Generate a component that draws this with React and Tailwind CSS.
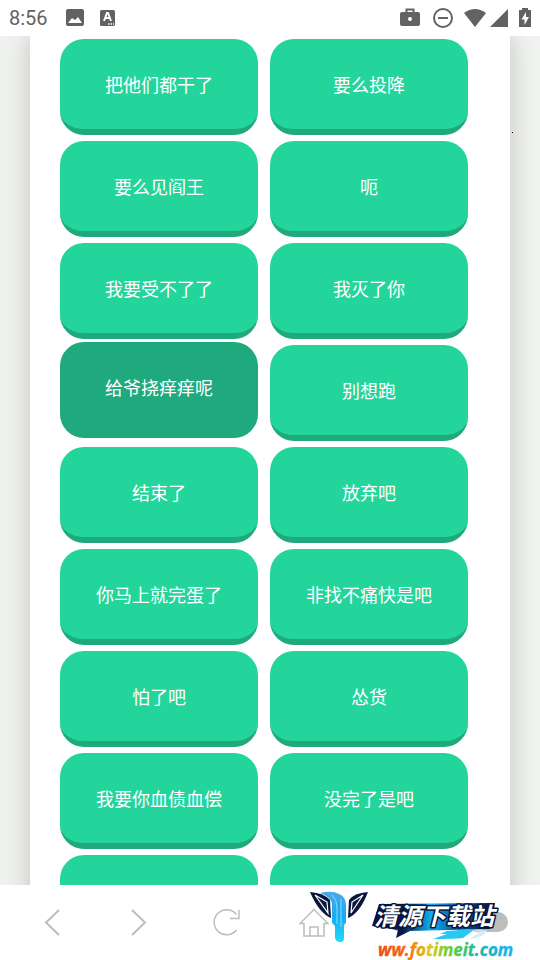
import React from "react";

const phrases = [
  "把他们都干了", "要么投降", "要么见阎王", "呃", "我要受不了了", "我灭了你",
  "给爷挠痒痒呢", "别想跑", "结束了", "放弃吧", "你马上就完蛋了", "非找不痛快是吧",
  "怕了吧", "怂货", "我要你血债血偿", "没完了是吧", "", "",
];

function PhraseButton({ label, pressed }) {
  return (
    <button
      type="button"
      aria-pressed={pressed}
      className={
        "h-24 rounded-3xl border-b-[6px] border-[#1fa97d] text-lg text-white " +
        (pressed ? "-translate-y-[3px] bg-[#1fa97d]" : "bg-[#24d59b]")
      }
    >
      {label}
    </button>
  );
}

function StatusBar() {
  return (
    <header className="flex h-9 shrink-0 items-center justify-between bg-white pr-[9px] pl-[9px] text-[#626262]">
      <div className="flex items-center">
        <span className="w-14 font-[Roboto,sans-serif] text-xl">8:56</span>
        <svg className="size-5" viewBox="0 0 20 20" fill="currentColor" aria-hidden="true">
          <path fillRule="evenodd" d="M3 1h14a2 2 0 0 1 2 2v13a2 2 0 0 1-2 2H3a2 2 0 0 1-2-2V3a2 2 0 0 1 2-2Zm0 14h14l-4-6-3 3-3-2Z" />
        </svg>
        <svg className="ml-3 size-5" viewBox="0 0 20 20" aria-hidden="true">
          <rect x="3" y="2" width="15" height="16" rx="1.5" fill="currentColor" />
          <path d="m7 13 3-8h1l3 8m-6-3h5" fill="none" stroke="#fff" strokeWidth="2" />
          <path d="M11 16h1.500m1 0h1.500m1 0h1" stroke="#fff" strokeWidth="1.500" />
        </svg>
      </div>
      <div className="flex items-center">
        <svg className="h-5 w-[22px]" viewBox="0 0 22 20" aria-hidden="true">
          <rect x="1" y="4" width="20" height="14" rx="2" fill="currentColor" />
          <path d="M7.500 5V1.500h7V5" fill="none" stroke="currentColor" strokeWidth="2" />
          <circle cx="11" cy="11" r="2" fill="#fff" />
        </svg>
        <svg className="ml-3 size-5" viewBox="0 0 20 20" fill="none" stroke="currentColor" strokeWidth="2" aria-hidden="true">
          <circle cx="10" cy="10" r="9" />
          <path d="M5 10h10" />
        </svg>
        <svg className="ml-[10px] h-5 w-6" viewBox="0 0 24 20" fill="currentColor" aria-hidden="true">
          <path d="M1 5Q12-3 23 5L12 19Z" />
        </svg>
        <svg className="ml-[2px] size-5" viewBox="0 0 20 20" fill="currentColor" aria-hidden="true">
          <path d="M19 1v18H1Z" />
        </svg>
        <svg className="ml-[10px] h-5 w-3" viewBox="0 0 12 20" aria-hidden="true">
          <path d="M3 0h6v2h3v17H0V2h3Z" fill="currentColor" />
          <path d="M7 4 2.500 11.500H5.500V17L10 9H7Z" fill="#fff" />
        </svg>
      </div>
    </header>
  );
}

const navIcons = [
  { name: "后退", path: "M22 3 9 15.500l13 12.500", stroke: 2 },
  { name: "前进", path: "m8 3 13 12.500L8 28", stroke: 2 },
  { name: "刷新", path: "M25.500 23a12.500 12.500 0 1 1 0-15.500M28 3v8.500h-9", stroke: 1.5 },
  { name: "主页", path: "M1 16.500 15 2.500l14 14H25V29H5V16.500ZM11 29v-9h8v9", stroke: 1.5 },
  { name: "更多", path: "M15 6.500a9 9 0 1 0 0 18 9 9 0 0 0 0-18", stroke: 1.5 },
];

function Watermark() {
  return (
    <div className="pointer-events-none absolute top-0 right-0">
      <svg className="h-[75px] w-[236px]" viewBox="304 885 236 75" role="img" aria-label="清源下载站">
        <defs>
          <linearGradient id="beam" x1="0" y1="0" x2="0" y2="1">
            <stop offset="0" stopColor="#4aa8ea" />
            <stop offset=".5" stopColor="#18aaf2" />
            <stop offset="1" stopColor="#20dcfa" />
          </linearGradient>
          <linearGradient id="panel">
            <stop offset="0" stopColor="#07103a" />
            <stop offset=".25" stopColor="#07194a" />
            <stop offset=".48" stopColor="#10b0f0" />
            <stop offset=".7" stopColor="#0a4f9a" />
            <stop offset="1" stopColor="#071033" />
          </linearGradient>
          <linearGradient id="address" gradientUnits="userSpaceOnUse" x1="378" y1="0" x2="511" y2="0">
            <stop offset="0" stopColor="#ee4a16" />
            <stop offset=".22" stopColor="#f56b10" />
            <stop offset=".38" stopColor="#e3c51a" />
            <stop offset=".55" stopColor="#62cf34" />
            <stop offset=".75" stopColor="#16b8a8" />
            <stop offset="1" stopColor="#20aef5" />
          </linearGradient>
        </defs>
        <path d="M310 892q14 1 20 8l1 18q-12-5-21-26Z" fill="#08163d" />
        <path d="m315 895 12 7 1 11Zm0 0 13 18" fill="none" stroke="#fff" strokeWidth="1.2" />
        <path d="M368 892q-14 1-19 8l-1 18q12-5 20-26Z" fill="#08163d" />
        <path d="m363 895-11 7-1 11Zm0 0-12 18" fill="none" stroke="#fff" strokeWidth="1.2" />
        <path d="M320 893q12-3 19 1 7 3 7 11v18l-2 2v13q0 4-4 4t-5-4v-12l-3-3v-20q-3-7-12-10Z" fill="url(#beam)" />
        <path d="M332 895q5 5 5 12v17m4-25v28" fill="none" stroke="#81e5ff" strokeWidth="1" />
        <path d="m379 904 116-1-5 26-80 2-14 7 2-8-26-4Z" fill="url(#panel)" />
        <path d="m447 931 28-2-12 9q-10 1-30 1l14-5-7 0Z" fill="#25c9f2" />
        <path d="M487 930q-3 8-17 9l10-8Z" fill="#d9edf6" />
        <text x="374" y="925" fontFamily="Noto Sans CJK SC, sans-serif" fontSize="24" fontWeight="700" fontStyle="italic" fill="#fff" stroke="#08163d" strokeWidth="3" strokeLinejoin="round" paintOrder="stroke">清源下载站</text>
        <text x="378" y="956" fontFamily="Open Sans, sans-serif" fontSize="17" fontWeight="700" fontStyle="italic" fill="url(#address)" stroke="url(#address)" strokeWidth=".3">ww.fotimeit.com</text>
      </svg>
    </div>
  );
}

export default function App() {
  return (
    <div className="flex h-screen flex-col overflow-hidden bg-white font-['Noto_Sans_CJK_SC',sans-serif]">
      <StatusBar />
      <main className="relative min-h-0 flex-1 overflow-hidden bg-[#f0f2ef] px-[30px]">
        <div className="grid grid-cols-2 gap-x-3 gap-y-[6px] bg-white pt-[3px] pr-[42px] pl-[30px] shadow-[0_0_24px_rgba(0,0,0,0.2)]">
          {phrases.map((label, index) => (
            <PhraseButton key={index} label={label} pressed={index === 6} />
          ))}
        </div>
        <span className="absolute top-24 right-[27px] size-px bg-black" />
      </main>
      <nav className="relative h-[75px] shrink-0 bg-white">
        <div className="grid h-full grid-cols-6 items-center px-2 pb-[2px]">
          {navIcons.map((icon) => (
            <button key={icon.name} type="button" aria-label={icon.name} className="flex justify-center">
              <svg className="size-[30px]" viewBox="0 0 30 30" fill="none" stroke="#bdbdbd" strokeWidth={icon.stroke}>
                <path d={icon.path} />
              </svg>
            </button>
          ))}
          <label className="flex justify-center">
            <input
              type="checkbox"
              role="switch"
              aria-label="夜间模式"
              className="h-5 w-10 appearance-none rounded-full bg-[#bdbdbd] before:block before:size-5 before:rounded-full before:border before:border-[#bdbdbd] before:bg-[#eeeeee]"
            />
          </label>
        </div>
        <Watermark />
      </nav>
    </div>
  );
}
